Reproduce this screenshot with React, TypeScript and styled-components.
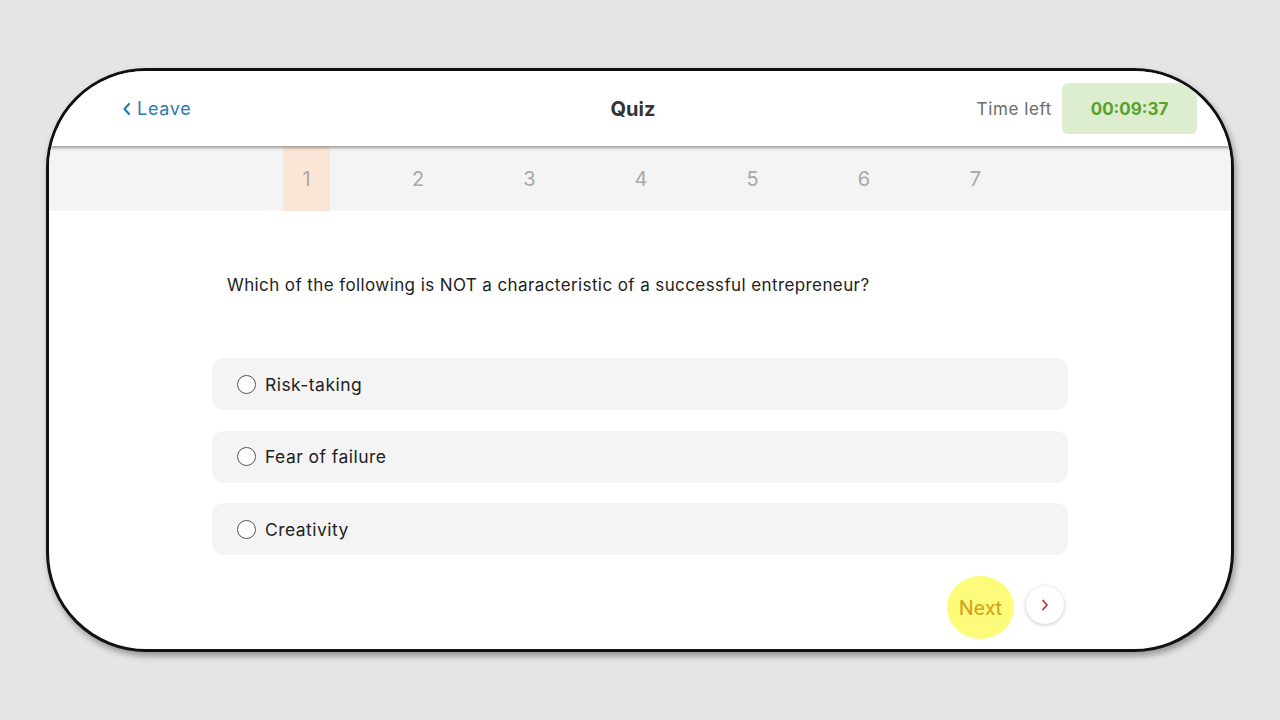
import React from "react";
import styled, { createGlobalStyle } from "styled-components";

const Global = createGlobalStyle`
  html, body { margin: 0; padding: 0; background: #e5e5e5; }
  body { font-family: Inter, "Noto Sans", "Liberation Sans", sans-serif; }
  * { box-sizing: border-box; }
`;

const Page = styled.div`
  width: 1280px;
  height: 720px;
  padding: 68px 46px 0 46px;
`;

const Device = styled.div`
  width: 1188px;
  height: 584px;
  border: 3px solid #111;
  border-radius: 100px;
  background: #fff;
  overflow: hidden;
  box-shadow: 2px 4px 6px rgba(0, 0, 0, 0.35);
  display: flex;
  flex-direction: column;
`;

const Header = styled.header`
  height: 75px;
  flex: none;
  display: grid;
  grid-template-columns: 1fr auto 1fr;
  align-items: center;
  padding: 0 34px 0 20px;
  background: #fff;
  position: relative;
  z-index: 1;
  box-shadow: 0 2px 3px rgba(0, 0, 0, 0.35);
`;

const Leave = styled.a`
  margin-left: 53px;
  display: flex;
  align-items: center;
  gap: 6px;
  color: #2b7bb6;
  font-size: 18px;
  letter-spacing: 0.7px;
  text-decoration: none;
`;

const Title = styled.h1`
  margin: 0;
  font-size: 20px;
  font-weight: 700;
  color: #333;
`;

const Right = styled.div`
  display: flex;
  justify-content: flex-end;
  align-items: center;
  gap: 10px;
`;

const TimeLabel = styled.span`
  font-size: 17px;
  letter-spacing: 0.6px;
  color: #6b6b6b;
`;

const Timer = styled.div`
  width: 135px;
  height: 51px;
  border-radius: 6px;
  background: #dcedd0;
  color: #5aa12a;
  font-weight: 700;
  font-size: 17px;
  display: flex;
  align-items: center;
  justify-content: center;
`;

const Tabs = styled.nav`
  height: 65px;
  flex: none;
  background: #f4f4f4;
  display: flex;
  justify-content: center;
  gap: 64.5px;
  padding-left: 2px;
`;

const Tab = styled.div<{ $active?: boolean }>`
  width: 47px;
  display: flex;
  align-items: center;
  justify-content: center;
  font-size: 20px;
  color: #a8a8a8;
  background: ${(p) => (p.$active ? "#fae5d7" : "transparent")};
`;

const Content = styled.main`
  width: 856px;
  margin: 0 auto;
  padding-top: 62px;
  display: flex;
  flex-direction: column;
`;

const Question = styled.p`
  margin: 0 0 61px 15px;
  font-size: 17px;
  line-height: 24px;
  letter-spacing: 0.4px;
  color: #222;
`;

const Options = styled.div`
  display: flex;
  flex-direction: column;
  gap: 20.5px;
`;

const Option = styled.label`
  height: 52px;
  border-radius: 12px;
  background: #f4f4f4;
  display: flex;
  align-items: center;
  padding-left: 25px;
  gap: 9px;
  font-size: 17.5px;
  letter-spacing: 0.45px;
  color: #222;
`;

const Radio = styled.span`
  width: 19px;
  height: 19px;
  border-radius: 50%;
  border: 1.6px solid #555;
  background: #fff;
  flex: none;
`;

const Footer = styled.div`
  display: flex;
  justify-content: flex-end;
  align-items: center;
  gap: 12px;
  margin-top: 21px;
  padding-right: 4px;
`;

const NextButton = styled.button`
  width: 67px;
  height: 63px;
  border: none;
  border-radius: 50%;
  background: #fdfb7a;
  color: #d6a21c;
  font-family: Roboto, Inter, sans-serif;
  font-size: 21px;
  padding: 0;
  display: flex;
  align-items: center;
  justify-content: center;
`;

const ArrowButton = styled.button`
  width: 38px;
  height: 38px;
  border: none;
  border-radius: 50%;
  background: #fff;
  box-shadow: 0 1px 4px rgba(0, 0, 0, 0.22);
  display: flex;
  align-items: center;
  justify-content: center;
  padding: 0;
  margin-top: -6px;
`;

export default function App() {
  const tabs = [1, 2, 3, 4, 5, 6, 7];
  const options = ["Risk-taking", "Fear of failure", "Creativity"];
  return (
    <Page>
      <Global />
      <Device>
        <Header>
          <div>
            <Leave href="#">
              <svg width="9" height="14" viewBox="0 0 9 14">
                <path d="M7 2 L2.5 7 L7 12" fill="none" stroke="#2b7bb6" strokeWidth="2.2" strokeLinecap="round" strokeLinejoin="round" />
              </svg>
              Leave
            </Leave>
          </div>
          <Title>Quiz</Title>
          <Right>
            <TimeLabel>Time left</TimeLabel>
            <Timer>00:09:37</Timer>
          </Right>
        </Header>
        <Tabs>
          {tabs.map((t) => (
            <Tab key={t} $active={t === 1}>
              {t}
            </Tab>
          ))}
        </Tabs>
        <Content>
          <Question>Which of the following is NOT a characteristic of a successful entrepreneur?</Question>
          <Options>
            {options.map((o) => (
              <Option key={o}>
                <Radio />
                {o}
              </Option>
            ))}
          </Options>
          <Footer>
            <NextButton>Next</NextButton>
            <ArrowButton>
              <svg width="8" height="12" viewBox="0 0 8 12">
                <path d="M2 1.5 L6 6 L2 10.5" fill="none" stroke="#b53a2a" strokeWidth="1.8" strokeLinecap="round" strokeLinejoin="round" />
              </svg>
            </ArrowButton>
          </Footer>
        </Content>
      </Device>
    </Page>
  );
}
